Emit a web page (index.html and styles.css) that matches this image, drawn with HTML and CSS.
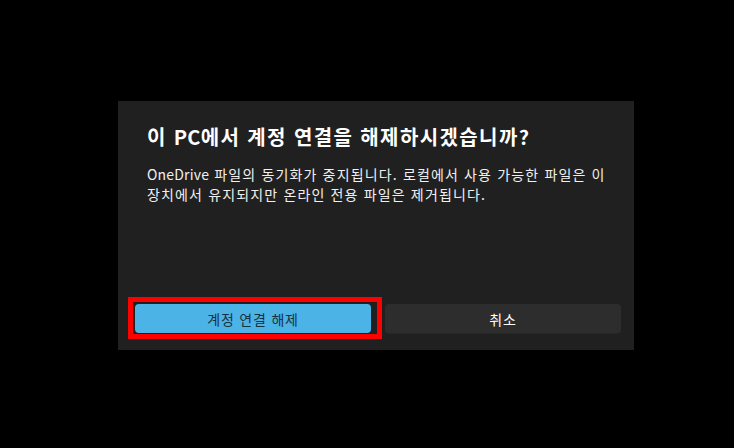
FILE: index.html
```html
<!DOCTYPE html>
<html lang="ko">
<head>
<meta charset="utf-8">
<title>계정 연결 해제</title>
<link rel="stylesheet" href="styles.css">
</head>
<body>
<div class="dialog">
  <div class="content">
    <h1 class="title">이 <span class="latin">PC</span>에서 계정 연결을 해제하시겠습니까?</h1>
    <p class="message"><span class="latin">OneDrive</span> 파일의 동기화가 중지됩니다. 로컬에서 사용 가능한 파일은 이<br>장치에서 유지되지만 온라인 전용 파일은 제거됩니다.</p>
  </div>
  <div class="footer">
    <button class="btn btn-primary">계정 연결 해제<span class="highlight"></span></button>
    <button class="btn btn-secondary">취소</button>
  </div>
</div>
</body>
</html>
```

FILE: styles.css
```css
html, body {
  margin: 0;
  padding: 0;
  background: #000;
  width: 734px;
  height: 448px;
  overflow: hidden;
}

body {
  font-family: "Noto Sans CJK KR", "Noto Sans", sans-serif;
  color: #fff;
}

.dialog {
  margin: 101px 0 0 118px;
  width: 516px;
  height: 249px;
  background: #202020;
  display: flex;
  flex-direction: column;
  box-sizing: border-box;
}

.content {
  flex: 1;
  padding: 22px 10px 0 29px;
}

.title {
  margin: 0;
  font-size: 20px;
  font-weight: 600;
  line-height: 28px;
  letter-spacing: 1.4px;
  color: #fff;
}

.message {
  margin: 13px 0 0 0;
  font-size: 14px;
  line-height: 20px;
  letter-spacing: 1.15px;
  color: #f0f0f0;
  white-space: nowrap;
}

.latin {
  letter-spacing: 0.2px;
}

.footer {
  display: flex;
  gap: 14px;
  padding: 0 13px 17px 17px;
}

.btn {
  flex: 0 0 236px;
  height: 29px;
  border: none;
  border-radius: 4px;
  font-family: inherit;
  font-size: 14px;
  letter-spacing: 0.8px;
  padding: 0;
  position: relative;
}

.btn-primary {
  background: #4cb3e6;
  color: #18313f;
  width: 236px;
}

.btn-secondary {
  background: #2d2d2d;
  color: #fff;
  box-shadow: 0 1px 0 #262626;
}

.highlight {
  position: absolute;
  left: -7px;
  top: -7px;
  right: -11px;
  bottom: -6px;
  border: 5px solid #ff0000;
  pointer-events: none;
}
```
